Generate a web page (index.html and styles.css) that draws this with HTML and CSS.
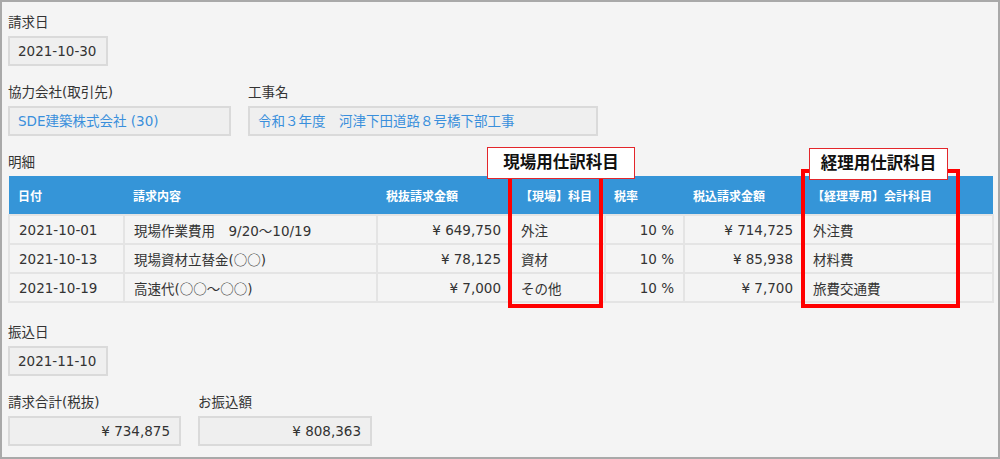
FILE: index.html
```html
<!DOCTYPE html>
<html lang="ja">
<head>
  <meta charset="UTF-8">
  <title>請求書詳細</title>
  <link rel="stylesheet" href="styles.css">
</head>
<body>
  <div class="page">
    <div class="field">
      <div class="label">請求日</div>
      <div class="box box-date">2021-10-30</div>
    </div>

    <div class="field-row">
      <div class="field">
        <div class="label">協力会社(取引先)</div>
        <div class="box box-company link">SDE建築株式会社 (30)</div>
      </div>
      <div class="field">
        <div class="label">工事名</div>
        <div class="box box-project link">令和３年度　河津下田道路８号橋下部工事</div>
      </div>
    </div>

    <div class="label">明細</div>
    <div class="detail">
      <table class="detail-table">
        <colgroup>
          <col style="width:115px">
          <col style="width:253px">
          <col style="width:134px">
          <col style="width:94px">
          <col style="width:79px">
          <col style="width:119px">
          <col style="width:190px">
        </colgroup>
        <thead>
          <tr>
            <th>日付</th>
            <th>請求内容</th>
            <th>税抜請求金額</th>
            <th>【現場】科目</th>
            <th>税率</th>
            <th>税込請求金額</th>
            <th>【経理専用】会計科目</th>
          </tr>
        </thead>
        <tbody>
          <tr>
            <td>2021-10-01</td>
            <td>現場作業費用　9/20～10/19</td>
            <td class="num">¥ 649,750</td>
            <td>外注</td>
            <td class="num">10 %</td>
            <td class="num">¥ 714,725</td>
            <td>外注費</td>
          </tr>
          <tr>
            <td>2021-10-13</td>
            <td>現場資材立替金(<span class="cjk">○○</span>)</td>
            <td class="num">¥ 78,125</td>
            <td>資材</td>
            <td class="num">10 %</td>
            <td class="num">¥ 85,938</td>
            <td>材料費</td>
          </tr>
          <tr>
            <td>2021-10-19</td>
            <td>高速代(<span class="cjk">○○～○○</span>)</td>
            <td class="num">¥ 7,000</td>
            <td>その他</td>
            <td class="num">10 %</td>
            <td class="num">¥ 7,700</td>
            <td>旅費交通費</td>
          </tr>
        </tbody>
      </table>

      <!-- 注記 -->
      <div class="mark mark-site"></div>
      <div class="tag tag-site">現場用仕訳科目</div>
      <div class="mark mark-acct"></div>
      <div class="tag tag-acct">経理用仕訳科目</div>
    </div>

    <div class="field">
      <div class="label">振込日</div>
      <div class="box box-date">2021-11-10</div>
    </div>

    <div class="field-row">
      <div class="field">
        <div class="label">請求合計(税抜)</div>
        <div class="box box-total amount">¥ 734,875</div>
      </div>
      <div class="field">
        <div class="label">お振込額</div>
        <div class="box box-paid amount">¥ 808,363</div>
      </div>
    </div>
  </div>
</body>
</html>
```

FILE: styles.css
```css
:root {
  --bg: #f4f4f4;
  --frame: #a9a9a9;
  --box-bg: #efefef;
  --box-border: #dadada;
  --text: #333;
  --link: #3a8fdc;
  --head: #3595d8;
  --line: #e4e4e4;
  --red: #ff0000;
}

body {
  margin: 0;
  font-family: "DejaVu Sans", "Noto Sans CJK JP", sans-serif;
  font-size: 13.5px;
  color: var(--text);
}

.page {
  box-sizing: border-box;
  width: 1000px;
  height: 459px;
  border: 2px solid var(--frame);
  background: var(--bg);
  padding: 10px 6px 0;
  overflow: hidden;
}

.label {
  line-height: 20px;
  margin-bottom: 4px;
  white-space: nowrap;
}

.field {
  margin-bottom: 16px;
}

.field-row {
  display: flex;
  gap: 17px;
}

.box {
  box-sizing: border-box;
  height: 30px;
  line-height: 26px;
  border: 2px solid var(--box-border);
  background: var(--box-bg);
  padding: 0 9px 0 8px;
  white-space: nowrap;
}

.box-date { width: 100px; }
.box-company { width: 223px; }
.box-project { width: 350px; }
.box-total { width: 173px; }
.box-paid { width: 174px; }

.link { color: var(--link); }
.amount { text-align: right; }
.cjk { font-family: "Noto Sans CJK JP", sans-serif; }

.detail {
  position: relative;
  margin-bottom: 19px;
}

.detail-table {
  width: 984px;
  table-layout: fixed;
  border-collapse: collapse;
}

.detail-table th {
  height: 38px;
  padding: 0 9px;
  background: var(--head);
  color: #fff;
  font-size: 12px;
  font-weight: bold;
  text-align: left;
  white-space: nowrap;
  border: 0;
}

.detail-table td {
  height: 27px;
  padding: 0 9px;
  border: 2px solid var(--line);
  white-space: nowrap;
}

.detail-table td.num { text-align: right; }

.mark {
  position: absolute;
  top: -7px;
  height: 139px;
  box-sizing: border-box;
  border: 4px solid var(--red);
}

.mark-site { left: 500px; width: 95px; }
.mark-acct { left: 793px; width: 159px; }

.tag {
  position: absolute;
  box-sizing: border-box;
  height: 32px;
  line-height: 30px;
  border: 1px solid #e3262b;
  background: #fff;
  color: #111;
  font-size: 16.5px;
  font-weight: bold;
  text-align: center;
  white-space: nowrap;
}

.tag-site { left: 479px; top: -29px; width: 148px; }
.tag-acct { left: 801px; top: -28px; width: 139px; }
```
